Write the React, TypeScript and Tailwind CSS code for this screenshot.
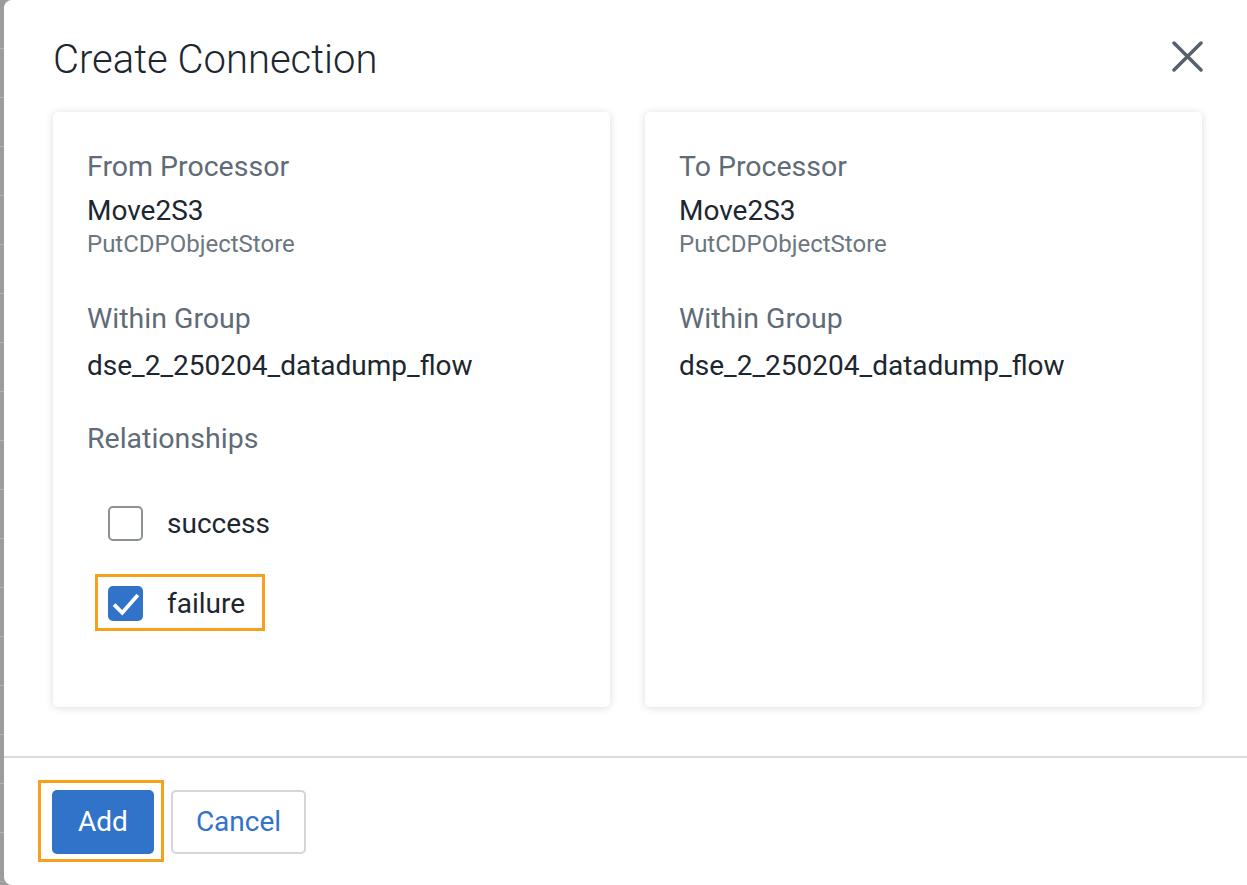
import React from 'react';

const font = { fontFamily: 'Roboto, "Liberation Sans", sans-serif' };

const Checkbox = ({ checked }: { checked: boolean }) =>
  checked ? (
    <div className="w-[35px] h-[35px] rounded-[5px] bg-[#3173c9] flex items-center justify-center shrink-0">
      <svg viewBox="0 0 24 24" className="w-[30px] h-[30px]" fill="none" stroke="white" strokeWidth="3" strokeLinecap="square">
        <path d="M3.5 13.5 L9 19 L20.5 6" />
      </svg>
    </div>
  ) : (
    <div className="w-[35px] h-[35px] rounded-[5px] border-2 border-[#8c9196] bg-white shrink-0" />
  );

const ProcessorCard = ({ title, children }: { title: string; children?: React.ReactNode }) => (
  <div className="flex-1 h-[595px] rounded-[5px] bg-white shadow-[0_1px_8px_rgba(0,0,0,0.14)] pl-[34px] pt-[39px]">
    <div className="text-[28.5px] leading-[32px] text-[#5f6b76]">{title}</div>
    <div className="mt-[12px] text-[28px] leading-[32px] text-[#1d2730]">Move2S3</div>
    <div className="mt-[2px] text-[24px] leading-[30px] text-[#6b7680]">PutCDPObjectStore</div>
    <div className="mt-[44px] text-[28.5px] leading-[32px] text-[#5f6b76]">Within Group</div>
    <div className="mt-[15px] text-[28px] leading-[32px] text-[#1d2730]">dse_2_250204_datadump_flow</div>
    {children}
  </div>
);

export default function App() {
  return (
    <div className="flex w-[1247px] h-[885px] bg-[#9c9c9c] overflow-hidden" style={font}>
      {/* page behind the dialog */}
      <div className="w-[4px] flex flex-col">
        {Array.from({ length: 18 }).map((_, i) => (
          <div key={i} className="h-[49px] border-b border-[#b4b4b4] shrink-0" />
        ))}
      </div>

      {/* dialog */}
      <div className="flex-1 bg-white rounded-l-[8px] flex flex-col">
        <div className="h-[112px] flex items-start justify-between pl-[49px] pr-[44px] pt-[36px]">
          <h1 className="text-[40px] leading-[48px] font-light text-[#1d2730]">Create Connection</h1>
          <button className="mt-[5px] w-[31px] h-[31px] flex items-center justify-center">
            <svg viewBox="0 0 31 31" className="w-[31px] h-[31px]" stroke="#56616b" strokeWidth="3.5" strokeLinecap="round">
              <path d="M2 2 L29 29 M29 2 L2 29" />
            </svg>
          </button>
        </div>

        <div className="flex gap-[35px] pl-[49px] pr-[45px]">
          <ProcessorCard title="From Processor">
            <div className="mt-[41px] text-[28.5px] leading-[32px] text-[#5f6b76]">Relationships</div>
            <div className="mt-[51px] flex flex-col gap-[45px] pl-[21px]">
              <div className="flex items-center gap-[24px] h-[35px]">
                <Checkbox checked={false} />
                <span className="text-[28px] leading-[32px] text-[#1d2730]">success</span>
              </div>
              <div className="relative flex items-center gap-[24px] h-[35px]">
                <div className="absolute left-[-13px] top-[-12px] w-[170px] h-[57px] border-[3px] border-[#f5a11c]" />
                <Checkbox checked />
                <span className="text-[28px] leading-[32px] text-[#1d2730]">failure</span>
              </div>
            </div>
          </ProcessorCard>
          <ProcessorCard title="To Processor" />
        </div>

        <div className="mt-[49px] border-t-2 border-[#dadadf]" />

        <div className="flex items-center gap-[17px] pl-[48px] pt-[32px]">
          <div className="relative">
            <div className="absolute left-[-14px] top-[-10px] w-[126px] h-[82px] border-[3px] border-[#f5a11c]" />
            <button className="relative w-[102px] h-[64px] rounded-[5px] bg-[#3173c9] text-white text-[28px]">Add</button>
          </div>
          <button className="w-[135px] h-[64px] rounded-[5px] border-2 border-[#d3d5da] bg-white text-[#3173c9] text-[28px]">Cancel</button>
        </div>
      </div>
    </div>
  );
}
